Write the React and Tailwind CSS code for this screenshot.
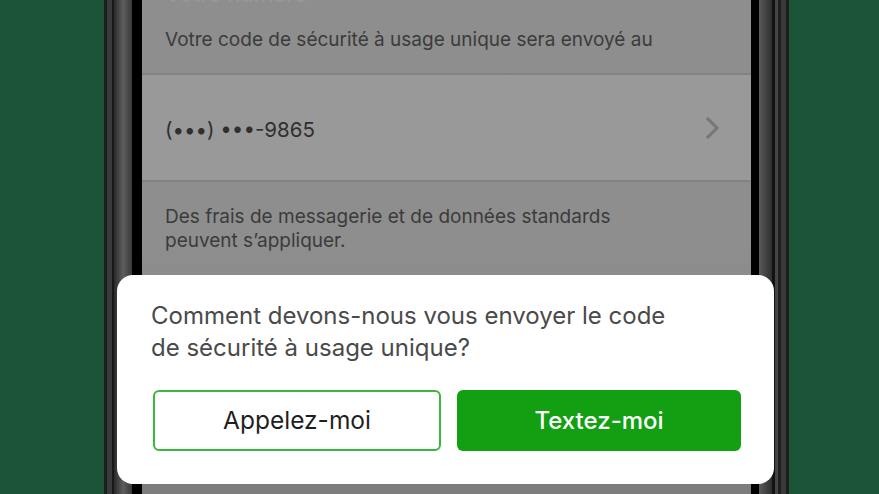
import React from 'react';

const ChevronRight = () => (
    <svg width="16" height="24" viewBox="0 0 16 24" fill="none">
        <path d="M3 3 L12 12 L3 21" stroke="#767676" strokeWidth="3" strokeLinecap="square" />
    </svg>
);

const App = () => {
    return (
        <div
            className="relative flex h-[494px] w-[879px] overflow-hidden bg-[#1c5438]"
            style={{ fontFamily: 'Inter, "Noto Sans", sans-serif' }}
        >
            {/* left frame */}
            <div className="w-[104px] shrink-0" />
            <div className="flex w-[38px] shrink-0">
                <div className="w-[3px] bg-[#1e1e1e]" />
                <div className="w-[5px] bg-[#3a3a3a]" />
                <div className="w-[2px] bg-[#181818]" />
                <div className="w-[18px] bg-gradient-to-r from-[#2a2a2a] via-[#5e5e5e] to-[#3a3a3a]" />
                <div className="w-[10px] bg-black" />
            </div>

            {/* screen */}
            <div className="flex w-[609px] shrink-0 flex-col bg-gradient-to-b from-[#8e8e8e] from-50% to-[#7c7c7c] text-[#3b3b3b]">
                <div className="mt-[-17px] px-[23px] text-[22px] font-medium leading-[22px] text-[#979797]">Votre numéro</div>
                <div className="px-[23px] pt-[23px] pb-[21px] text-[19px] leading-[24px]">
                    Votre code de sécurité à usage unique sera envoyé au
                </div>
                <div className="flex h-[109px] items-center justify-between border-y-2 border-[#828282] bg-[#999999] pl-[23px] pr-[30px]">
                    <span className="pt-[5px] text-[20.5px] text-[#2f2f2f]">(•••) •••-9865</span>
                    <ChevronRight />
                </div>
                <div className="px-[23px] pt-[23px] text-[19px] leading-[24px]">
                    Des frais de messagerie et de données standards
                    <br />
                    peuvent s’appliquer.
                </div>
            </div>

            {/* right frame */}
            <div className="flex w-[38px] shrink-0">
                <div className="w-[8px] bg-black" />
                <div className="w-[13px] bg-gradient-to-r from-[#5a5a5a] to-[#2e2e2e]" />
                <div className="w-[3px] bg-[#111111]" />
                <div className="w-[3px] bg-[#444444]" />
                <div className="w-[3px] bg-[#1e1e1e]" />
                <div className="w-[5px] bg-[#3a3a3a]" />
                <div className="w-[3px] bg-[#1e1e1e]" />
            </div>
            <div className="flex-1" />

            {/* modal sheet */}
            <div className="absolute left-[117px] top-[275px] flex h-[209px] w-[657px] flex-col rounded-[16px] bg-white">
                <p className="pl-[34px] pt-[25px] text-[24px] leading-[32px] text-[#4a4a4a]">
                    Comment devons-nous vous envoyer le code
                    <br />
                    de sécurité à usage unique?
                </p>
                <div className="mt-[26px] flex gap-[16px] pl-[36px] pr-[33px]">
                    <button className="flex h-[61px] flex-1 items-center justify-center rounded-[6px] border-2 border-[#3cb63c] bg-white text-[24.5px] text-[#1f1f1f]">
                        Appelez-moi
                    </button>
                    <button className="flex h-[61px] flex-1 items-center justify-center rounded-[6px] bg-[#12a012] text-[24px] font-medium text-white">
                        Textez-moi
                    </button>
                </div>
            </div>
        </div>
    );
};

export default App;
